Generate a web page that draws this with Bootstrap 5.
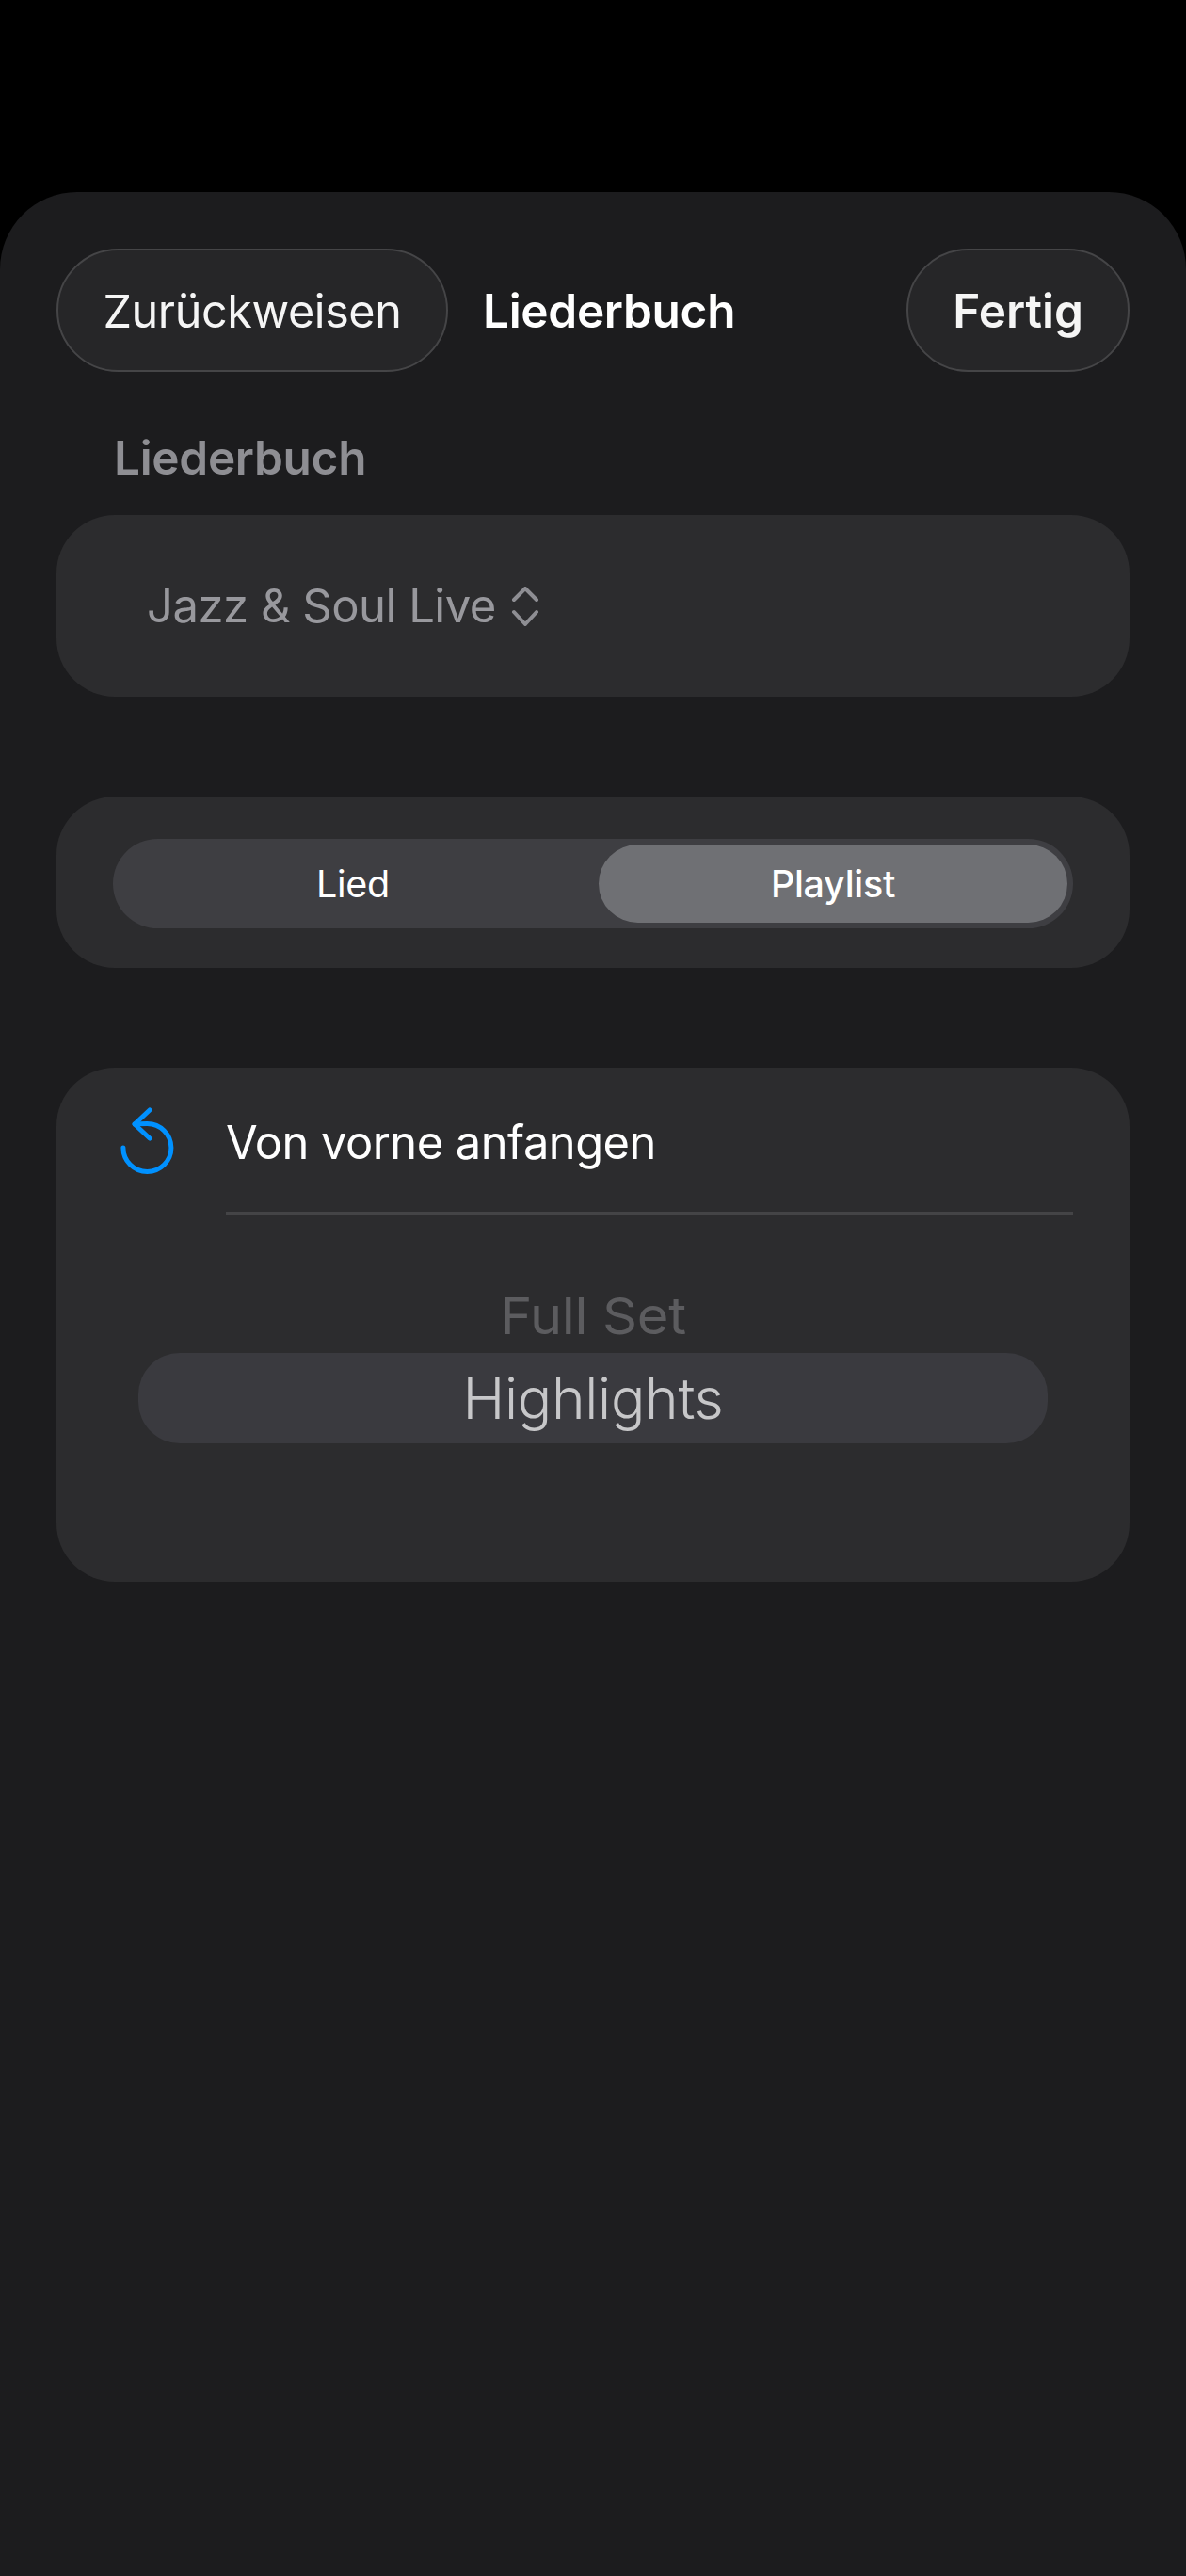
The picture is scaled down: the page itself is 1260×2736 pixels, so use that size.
<!DOCTYPE html>
<html lang="de">
<head>
<meta charset="utf-8">
<title>Liederbuch</title>
<link href="https://cdn.jsdelivr.net/npm/bootstrap@5.3.0/dist/css/bootstrap.min.css" rel="stylesheet">
<style>
html,body{background:#000;margin:0;height:100%}
body{font-family:"Inter","Liberation Sans",sans-serif;color:#fff;letter-spacing:-.3px}
.sheet{background:#1c1c1e;margin-top:204px;min-height:2532px;border-radius:82px 82px 0 0;padding:60px 60px 0}
.topbar{height:131px}
.pill-btn{height:131px;border-radius:66px;background:#262628;border:2px solid #454547;color:#f5f5f5;display:flex;align-items:center;justify-content:center;padding:4px 0 0}
.pill-left{width:416px;font-weight:400;font-size:48.500px;letter-spacing:-.4px}
.pill-right{width:237px;font-weight:600;font-size:49.500px;padding-top:2px}
.sheet-title{font-size:49.500px;font-weight:600;margin-left:37px;color:#fff;padding-top:2px}
.sect-label{font-size:49.500px;font-weight:600;color:#8e8e93;margin:61px 0 0 61px;line-height:60px;height:55px}
.panel{background:#2c2c2e;border-radius:62px}
.book-panel{height:193px;margin-top:36px;padding-left:96px;color:#98989d;font-size:49px;font-weight:400;letter-spacing:-.5px}
.seg-panel{height:182px;margin-top:106px;padding:3px 60px 0}
.seg-track{background:#3e3e42;border-radius:48px;height:95px;padding:6px}
.seg-cell{flex:1 1 0;font-size:39.500px;color:#fff;height:83px;border-radius:42px;padding-top:2px}
.seg-first{flex:0 0 498px;font-weight:400;margin-right:12px}
.seg-on{flex:0 0 498px;background:#6f7074;font-weight:500}
.restart-panel{height:546px;margin-top:106px}
.restart-row{height:156px;margin-left:180px;margin-right:60px;border-bottom:3px solid #444446;font-size:48.800px;font-weight:400;letter-spacing:-.5px;padding-top:6px}
.restart-icon{left:64px;top:38px;width:66px;height:80px}
.picker-wrap{padding:0 87px}
.wheel-off{font-size:54px;color:#5c5c5f;text-align:center;line-height:54px;margin-top:81px;height:66px;font-weight:400;transform:scaleX(1.07)}
.wheel-on{height:96px;border-radius:44px;background:#3a3a3f;color:#c7c7c9;font-size:60.500px;font-weight:300}
</style>
</head>
<body>
<div class="sheet">
  <div class="topbar d-flex align-items-center">
    <button type="button" class="btn pill-btn pill-left">Zurückweisen</button>
    <div class="sheet-title">Liederbuch</div>
    <button type="button" class="btn pill-btn pill-right ms-auto">Fertig</button>
  </div>
  <div class="sect-label">Liederbuch</div>
  <div class="panel book-panel d-flex align-items-center">
    <span>Jazz &amp; Soul Live</span>
    <svg class="ms-3" width="30" height="42" viewBox="0 0 30 42" fill="none" stroke="#8e8e93" stroke-width="4" stroke-linecap="round" stroke-linejoin="round"><path d="M3 14 15 2 27 14"/><path d="M3 27 15 40 27 27"/></svg>
  </div>
  <div class="panel seg-panel d-flex align-items-center">
    <div class="seg-track d-flex w-100">
      <div class="seg-cell seg-first d-flex align-items-center justify-content-center">Lied</div>
      <div class="seg-cell seg-on d-flex align-items-center justify-content-center">Playlist</div>
    </div>
  </div>
  <div class="panel restart-panel position-relative">
    <svg class="restart-icon position-absolute" viewBox="0 0 66 80" fill="none" stroke="#0091ff" stroke-width="5" stroke-linecap="round" stroke-linejoin="round"><path d="M35 7 19 22 35 37"/><path d="M19 22C23 21.500 28 21.500 32.400 21.500A25.500 25.500 0 1 1 6.900 47"/></svg>
    <div class="restart-row d-flex align-items-center">Von vorne anfangen</div>
    <div class="picker-wrap">
      <div class="wheel-off">Full Set</div>
      <div class="wheel-on d-flex align-items-center justify-content-center">Highlights</div>
    </div>
  </div>
</div>
<script src="https://cdn.jsdelivr.net/npm/bootstrap@5.3.0/dist/js/bootstrap.bundle.min.js"></script>
</body>
</html>
